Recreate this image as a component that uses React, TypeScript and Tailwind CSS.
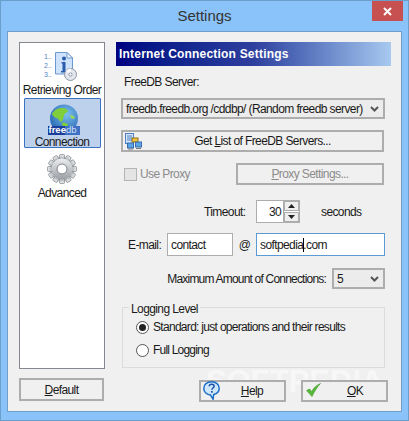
const font = { fontFamily: '"Liberation Sans", Arial, sans-serif' };

function OrderIcon() {
  return (
    <svg width="34" height="30" viewBox="0 0 34 30">
      <path d="M10.500 1.500H22l5.500 5.500V23H10.500z" fill="#cfe2fb" stroke="#6f97cf" />
      <path d="M22 1.500V7h5.500z" fill="#f4f9ff" stroke="#6f97cf" />
      <circle cx="19" cy="7.500" r="2" fill="#2a5cae" />
      <path d="M16.500 11h4v9h1.500v1.600h-6V20h1.500v-7.400h-1z" fill="#2a5cae" />
      <circle cx="25.500" cy="23.500" r="6" fill="#e4e6ee" stroke="#8d93a5" />
      <path d="M25.500 23.500L21 20a6 6 0 0 1 5-2.400z" fill="#fbfbff" />
      <circle cx="25.500" cy="23.500" r="1.600" fill="#fff" stroke="#8d93a5" />
    </svg>
  );
}

function GlobeIcon() {
  return (
    <svg width="32" height="31" viewBox="0 0 32 31" className="block translate-x-[2px]">
      <defs>
        <radialGradient id="sea" cx="0.6" cy="0.35" r="0.8">
          <stop offset="0" stopColor="#7cc0ee" />
          <stop offset="1" stopColor="#1a5aa8" />
        </radialGradient>
      </defs>
      <circle cx="16" cy="14.500" r="14" fill="url(#sea)" />
      <path d="M4 10c2-4 6-6 10-6 3 0 5 1 6 3-1 2-3 2-4 4 0 2-1 3-1 5l-2 2c-2-1-2-3-4-4-2 0-4-2-5-4z" fill="#7fce3a" />
      <path d="M14 19c2-1 5 0 6 2 0 2-2 3-3 4-1-2-3-3-3-6z" fill="#7fce3a" />
      <path d="M22 11c2 0 4 1 5 3-1 1-3 1-4 0z" fill="#9edb58" />
      <rect x="0" y="22" width="17" height="9" fill="#1a3e9a" />
      <rect x="17" y="22" width="15" height="9" fill="#3f70c4" />
    </svg>
  );
}

function GearIcon() {
  const teeth = Array.from({ length: 12 }, (_, i) => i * 30);
  return (
    <svg width="30" height="30" viewBox="0 0 30 30" className="mb-[2px]">
      <defs>
        <linearGradient id="steel" x1="0" y1="0" x2="0" y2="1">
          <stop offset="0" stopColor="#eceef0" />
          <stop offset="1" stopColor="#9a9ea3" />
        </linearGradient>
      </defs>
      {teeth.map((deg) => (
        <rect key={deg} x="12.500" y="0.500" width="5" height="6" rx="1" fill="url(#steel)" stroke="#7f8388" strokeWidth="0.7" transform={`rotate(${deg} 15 15)`} />
      ))}
      <circle cx="15" cy="15" r="10.500" fill="url(#steel)" />
      <circle cx="15" cy="15" r="5" fill="#fff" stroke="#7f8388" />
    </svg>
  );
}

function ServersIcon() {
  return (
    <svg width="17" height="17" viewBox="0 0 17 17">
      <rect x="0.500" y="0.500" width="8" height="10" fill="#d5e6fb" stroke="#4f7fc4" />
      <path d="M2 3h5M2 5h5M2 7h5" stroke="#4f7fc4" />
      <rect x="7" y="5" width="6" height="4" fill="#f2c33a" stroke="#8b6f1b" />
      <rect x="2.500" y="10" width="6" height="5" fill="#58a5e8" stroke="#3b6aa8" />
      <rect x="10.500" y="9" width="6" height="5" fill="#58a5e8" stroke="#3b6aa8" />
      <path d="M3 16h5M11 15.500h5" stroke="#777" />
    </svg>
  );
}

function HelpIcon() {
  return (
    <svg width="17" height="19" viewBox="0 0 17 19">
      <path d="M8.500 0.800C4 0.800.8 3.600.8 7.400c0 3.700 3.100 6.500 6.700 6.600l2.600 4.200.6-4.700c3.300-1 5.500-3.200 5.500-6.100C16.200 3.600 13 .8 8.500.8z" fill="#cfe7fb" stroke="#1e6fc6" strokeWidth="1.500" />
      <path d="M6 5.200c.4-1.300 1.500-1.900 2.700-1.900 1.400 0 2.400.9 2.400 2 0 1.700-2.300 1.700-2.300 3.500" fill="none" stroke="#1c4fa8" strokeWidth="1.500" />
      <rect x="8" y="10" width="1.700" height="1.700" fill="#1c4fa8" />
    </svg>
  );
}

function CheckIcon() {
  return (
    <svg width="15" height="14" viewBox="0 0 15 14">
      <path d="M0.500 7.500L3.500 6l2.200 2.500C7.500 5 10.500 2 14.500 0.500 11 4 8.500 8.500 6 13.500z" fill="#58b83a" stroke="#3f9a2b" strokeWidth="0.6" />
    </svg>
  );
}

function Chevron() {
  return (
    <svg width="9" height="6" viewBox="0 0 9 6" className="shrink-0">
      <path d="M1 1l3.500 3.500L8 1" fill="none" stroke="#555" strokeWidth="2" />
    </svg>
  );
}

function NavItem({ icon, label, active }: { icon: React.ReactNode; label: string; active?: boolean }) {
  return (
    <div className={`flex h-[50px] w-[77px] flex-col items-center justify-end rounded-[1px] ${active ? 'border border-[#3a72c4] bg-[#bdd0ec]' : ''}`}>
      {icon}
      <span className="-mb-[2px] whitespace-nowrap leading-[14px]">{label}</span>
    </div>
  );
}

function Btn({ className, children }: { className: string; children: React.ReactNode }) {
  return <div className={`flex items-center border-2 border-[#adadad] bg-[#f0f0f0] ${className}`}>{children}</div>;
}

export default function App() {
  return (
    <div style={font} className="relative flex h-[421px] w-[409px] flex-col overflow-hidden border border-[#6a9ecb] bg-[#8ac3f9] text-[12px] tracking-[-0.6px] text-[#1a1a1a]">
      {/* TITLE BAR */}
      <div className="relative flex h-[30px] shrink-0 items-center justify-center pt-px text-[15px] tracking-normal text-[#333]">
        Settings
        <div className="absolute right-[5px] top-0 flex h-[20px] w-[31px] items-center justify-center bg-[#c75050]">
          <svg width="9" height="9" viewBox="0 0 9 9">
            <path d="M1 1l7 7M8 1l-7 7" stroke="#fff" strokeWidth="2" />
          </svg>
        </div>
      </div>

      {/* CLIENT AREA */}
      <div className="mx-[6px] flex h-[381px] gap-[11px] border border-[#6f9fc8] bg-[#f0f0f0] pl-[11px] pr-[8px] pt-[10px]">
        {/* LEFT COLUMN */}
        <div className="flex w-[86px] shrink-0 flex-col">
          <div className="flex h-[327px] flex-col items-center gap-0 border border-[#828790] bg-white pt-[7px]">
            <div className="flex h-[48px] w-[77px] flex-col items-center justify-end pb-px">
              <div className="relative h-[30px] w-[34px] shrink-0">
                <OrderIcon />
                <div className="absolute -left-[1px] top-[1px] text-[7px] leading-[9px] tracking-normal text-[#4f7fc4]">
                  <div>1..</div>
                  <div>2..</div>
                  <div>3..</div>
                </div>
              </div>
              <span className="mt-[2px] whitespace-nowrap leading-[14px]">Retrieving Order</span>
            </div>
            <div className="relative">
              <NavItem icon={<GlobeIcon />} label="Connection" active />
              <div className="absolute left-[25px] top-[27px] text-[9.500px] font-bold leading-[9px] tracking-normal text-white">
                free<span className="font-normal text-[#cfe0f8]">db</span>
              </div>
            </div>
            <NavItem icon={<GearIcon />} label="Advanced" />
          </div>
          <Btn className="ml-0 mt-[9px] h-[23px] w-[85px] justify-center">
            <span>
              <u>D</u>efault
            </span>
          </Btn>
        </div>

        {/* RIGHT COLUMN */}
        <div className="flex w-[275px] flex-col">
          <div className="flex h-[24px] shrink-0 items-center bg-gradient-to-r from-[#000080] via-[#2f3f9e] to-[#a8c9ef] pl-[3px] font-bold tracking-[0.2px] text-white">
            Internet Connection Settings
          </div>

          <div className="mt-[9px] pl-[8px] leading-[14px]">FreeDB Server:</div>

          <div className="ml-[5px] mt-[9px] flex h-[21px] w-[264px] items-center justify-between border-2 border-[#adadad] bg-[#ececec] pl-[3px] pr-[4px]">
            <span className="whitespace-nowrap">freedb.freedb.org /cddbp/ (Random freedb server)</span>
            <Chevron />
          </div>

          <Btn className="relative ml-[5px] mt-[11px] h-[22px] w-[263px] justify-center">
            <div className="absolute left-[2px] top-[1px]">
              <ServersIcon />
            </div>
            <span className="pl-[20px]">
              Get <u>L</u>ist of FreeDB Servers...
            </span>
          </Btn>

          <div className="mt-[11px] flex h-[22px] items-center justify-between pl-[8px]">
            <div className="flex items-center gap-[3px] text-[#8b8b8b]">
              <div className="h-[13px] w-[13px] border border-[#b4b4b4] bg-[#e4e4e4]" />
              <span>Use Proxy</span>
            </div>
            <Btn className="mr-[7px] h-[22px] w-[148px] justify-center text-[#8b8b8b]">
              <span>
                <u>P</u>roxy Settings...
              </span>
            </Btn>
          </div>

          <div className="mt-[15px] flex h-[23px] items-center">
            <span className="ml-[88px] w-[51px]">Timeout:</span>
            <div className="ml-[1px] flex h-[23px] w-[44px] items-center justify-between border border-[#adadad] bg-white pl-[12px]">
              <span>30</span>
              <div className="flex h-full w-[16px] flex-col justify-between border-l border-[#adadad]">
                <div className="flex h-[10px] items-center justify-center border border-[#adadad] bg-[#eee]">
                  <svg width="7" height="4" viewBox="0 0 7 4">
                    <path d="M3.500 0L7 4H0z" fill="#222" />
                  </svg>
                </div>
                <div className="flex h-[10px] items-center justify-center border border-[#adadad] bg-[#eee]">
                  <svg width="7" height="4" viewBox="0 0 7 4">
                    <path d="M3.500 4L0 0h7z" fill="#222" />
                  </svg>
                </div>
              </div>
            </div>
            <span className="ml-[21px]">seconds</span>
          </div>

          <div className="mt-[10px] flex h-[23px] items-center">
            <span className="ml-[12px] w-[39px]">E-mail:</span>
            <div className="flex h-[23px] w-[66px] items-center border border-[#adadad] bg-white pl-[3px]">contact</div>
            <span className="w-[23px] text-center">@</span>
            <div className="flex h-[23px] w-[129px] items-center border border-[#5b9bd5] bg-white pl-[3px]">
              softpedia<span className="-mx-[0.5px] inline-block h-[14px] w-px bg-black" />.com
            </div>
          </div>

          <div className="mt-[12px] flex h-[21px] items-center justify-end pr-[6px]">
            <span className="tracking-[-0.8px]">Maximum Amount of Connections:</span>
            <div className="ml-[6px] flex h-[21px] w-[53px] items-center justify-between border-2 border-[#adadad] bg-[#ececec] pl-[3px] pr-[4px]">
              <span>5</span>
              <Chevron />
            </div>
          </div>

          {/* LOGGING GROUP */}
          <div className="relative ml-[6px] mt-[18px] flex h-[61px] w-[263px] flex-col gap-[9px] border border-[#dcdcdc] pl-[13px] pt-[12px]">
            <div className="absolute -top-[6px] left-[6px] bg-[#f0f0f0] px-[2px] leading-[14px]">Logging Level</div>
            <div className="flex h-[14px] items-center gap-[4px]">
              <div className="flex h-[13px] w-[13px] items-center justify-center rounded-full border border-[#555] bg-white">
                <div className="h-[7px] w-[7px] rounded-full bg-[#222]" />
              </div>
              <span className="tracking-[-0.7px]">Standard: just operations and their results</span>
            </div>
            <div className="flex h-[14px] items-center gap-[4px]">
              <div className="h-[13px] w-[13px] rounded-full border border-[#555] bg-white" />
              <span className="tracking-[-0.8px]">Full Logging</span>
            </div>
          </div>

          <div className="ml-[83px] mt-[12px] flex gap-[15px]">
            <Btn className="relative z-10 h-[22px] w-[87px] justify-center">
              <div className="absolute left-[2px] -top-[1px]">
                <HelpIcon />
              </div>
              <span className="pl-[19px]">
                <u>H</u>elp
              </span>
            </Btn>
            <Btn className="relative z-10 h-[22px] w-[87px] justify-center">
              <div className="absolute left-[3px] top-[1px]">
                <CheckIcon />
              </div>
              <span className="pl-[21px]">
                <u>O</u>K
              </span>
            </Btn>
          </div>
        </div>
      </div>

      {/* WATERMARK */}
      <div className="pointer-events-none absolute left-[205px] top-[363px] text-[31px] font-bold leading-[36px] tracking-normal text-white opacity-50">
        SOFTPEDIA
      </div>
    </div>
  );
}
